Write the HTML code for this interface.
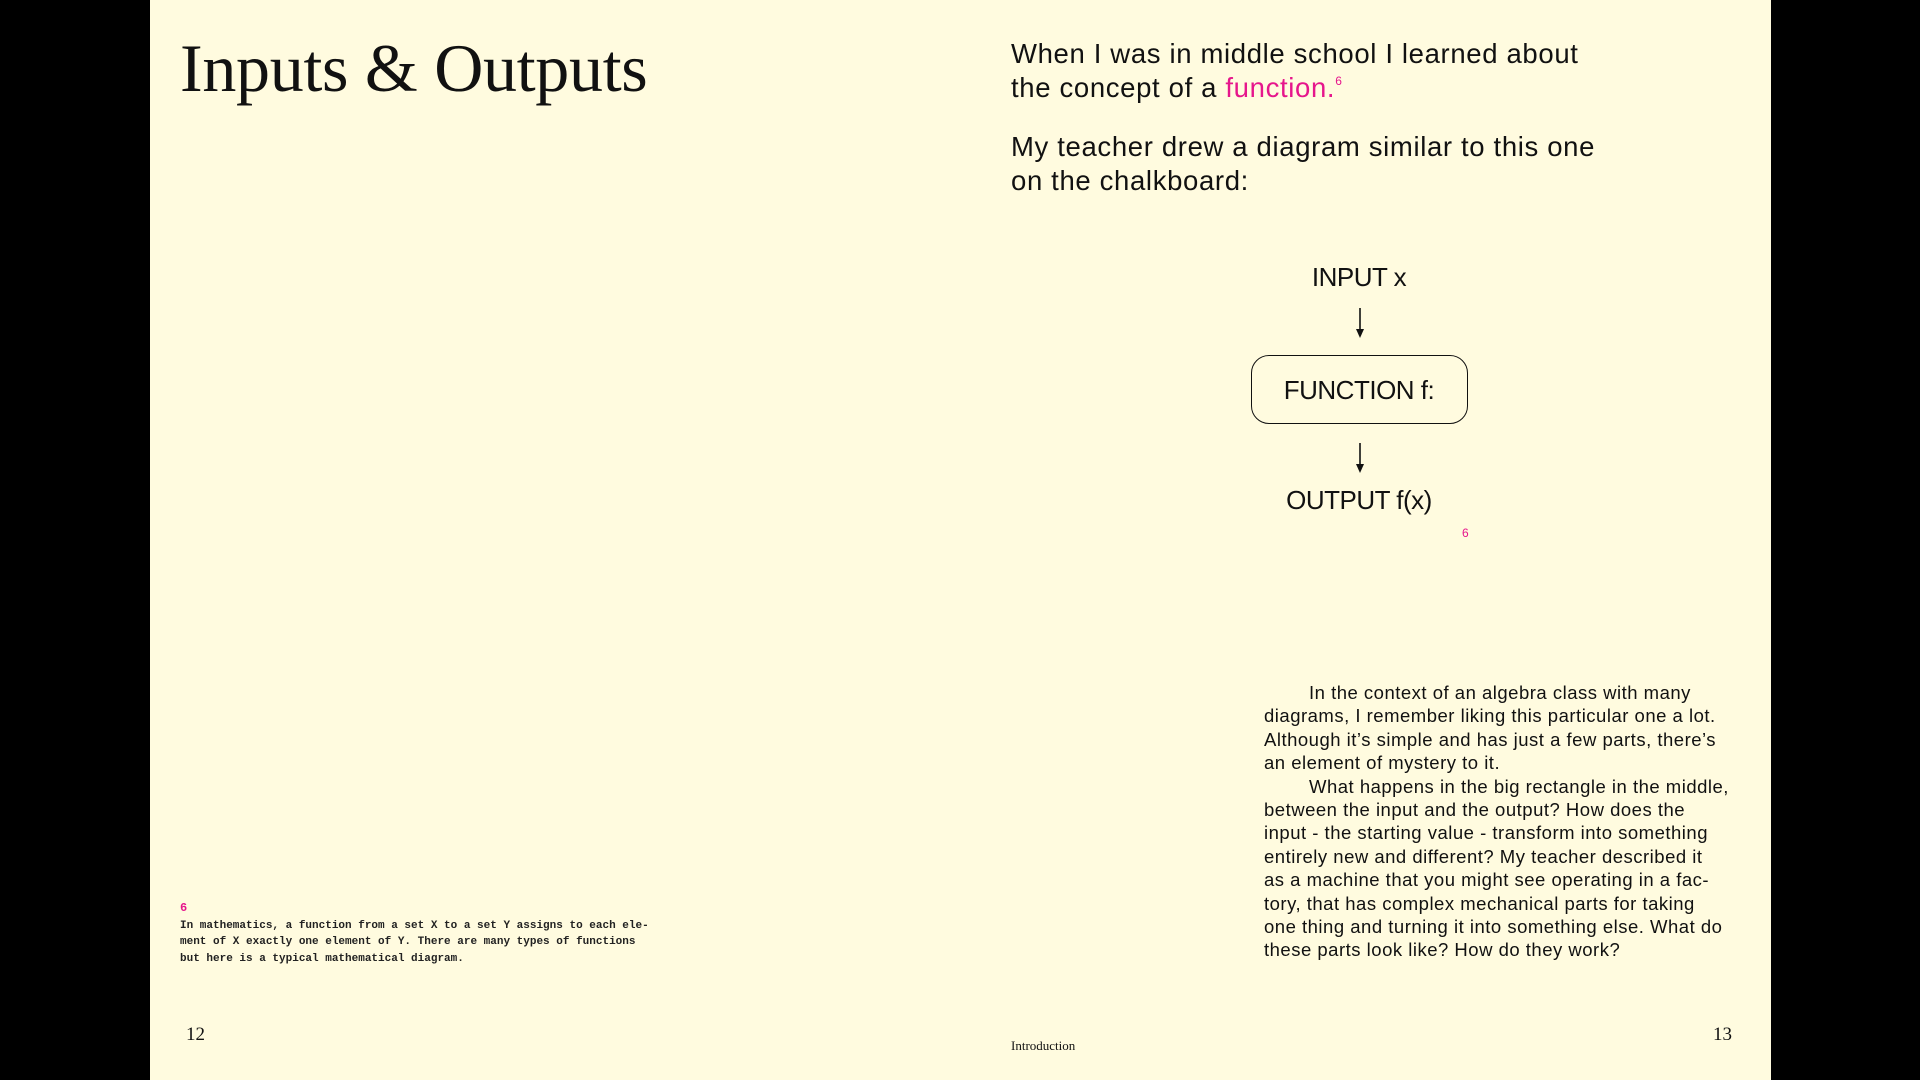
<!DOCTYPE html>
<html><head><meta charset="utf-8"><style>
html,body{margin:0;padding:0;width:1920px;height:1080px;background:#000;overflow:hidden}
.page{position:absolute;left:150px;top:0;width:1621px;height:1080px;background:#fffbdf}
.abs{position:absolute;white-space:nowrap;color:#111}
.serif{font-family:"Liberation Serif",serif}
.sans{font-family:"Liberation Sans",sans-serif}
.mono{font-family:"Liberation Mono",monospace}
.pink{color:#e6168c}
</style></head><body>
<div class="page"></div>
<div class="abs serif" style="left:180px;top:29px;font-size:68px;letter-spacing:-0.3px">Inputs &amp; Outputs</div>

<div class="abs sans" style="left:1011px;top:37px;font-size:27.5px;line-height:34px;letter-spacing:0.65px">When I was in middle school I learned about<br>the concept of a <span class="pink">function.<span style="font-size:12px;position:relative;top:-12px">6</span></span></div>
<div class="abs sans" style="left:1011px;top:130px;font-size:27.5px;line-height:34px;letter-spacing:0.65px">My teacher drew a diagram similar to this one<br>on the chalkboard:</div>

<div class="abs sans" style="left:1259px;top:262px;width:200px;text-align:center;font-size:26px;letter-spacing:-0.5px">INPUT x</div>
<svg style="position:absolute;left:1350px;top:300px" width="20" height="180">
<line x1="10" y1="8" x2="10" y2="34" stroke="#111" stroke-width="1.6"/><path d="M6 29 L10 38 L14 29 Z" fill="#111"/>
<line x1="10" y1="143" x2="10" y2="168" stroke="#111" stroke-width="1.6"/><path d="M6 164 L10 173 L14 164 Z" fill="#111"/>
</svg>
<div style="position:absolute;left:1251px;top:355px;width:215px;height:67px;border:1.6px solid #111;border-radius:18px"></div>
<div class="abs sans" style="left:1259px;top:375px;width:200px;text-align:center;font-size:26px;letter-spacing:-0.5px">FUNCTION f:</div>
<div class="abs sans" style="left:1209px;top:485px;width:300px;text-align:center;font-size:26px;letter-spacing:-0.5px">OUTPUT f(x)</div>
<div class="abs sans pink" style="left:1462px;top:526px;font-size:12px">6</div>

<div class="abs sans" style="left:1264px;top:681px;font-size:18.5px;line-height:23.4px;letter-spacing:0.5px">
<span style="padding-left:45px"></span>In the context of an algebra class with many<br>diagrams, I remember liking this particular one a lot.<br>Although it’s simple and has just a few parts, there’s<br>an element of mystery to it.<br>
<span style="padding-left:45px"></span>What happens in the big rectangle in the middle,<br>between the input and the output? How does the<br>input - the starting value - transform into something<br>entirely new and different? My teacher described it<br>as a machine that you might see operating in a fac-<br>tory, that has complex mechanical parts for taking<br>one thing and turning it into something else. What do<br>these parts look like? How do they work?</div>

<div class="abs mono pink" style="left:180px;top:901px;font-size:12px;font-weight:bold">6</div>
<div class="abs mono" style="left:180px;top:918px;font-size:11px;line-height:16.3px;font-weight:bold;color:#222">In mathematics, a function from a set X to a set Y assigns to each ele-<br>ment of X exactly one element of Y. There are many types of functions<br>but here is a typical mathematical diagram.</div>

<div class="abs serif" style="left:186px;top:1024px;font-size:19px">12</div>
<div class="abs serif" style="left:1713px;top:1024px;font-size:19px">13</div>
<div class="abs serif" style="left:1011px;top:1038px;font-size:13px">Introduction</div>
</body></html>
